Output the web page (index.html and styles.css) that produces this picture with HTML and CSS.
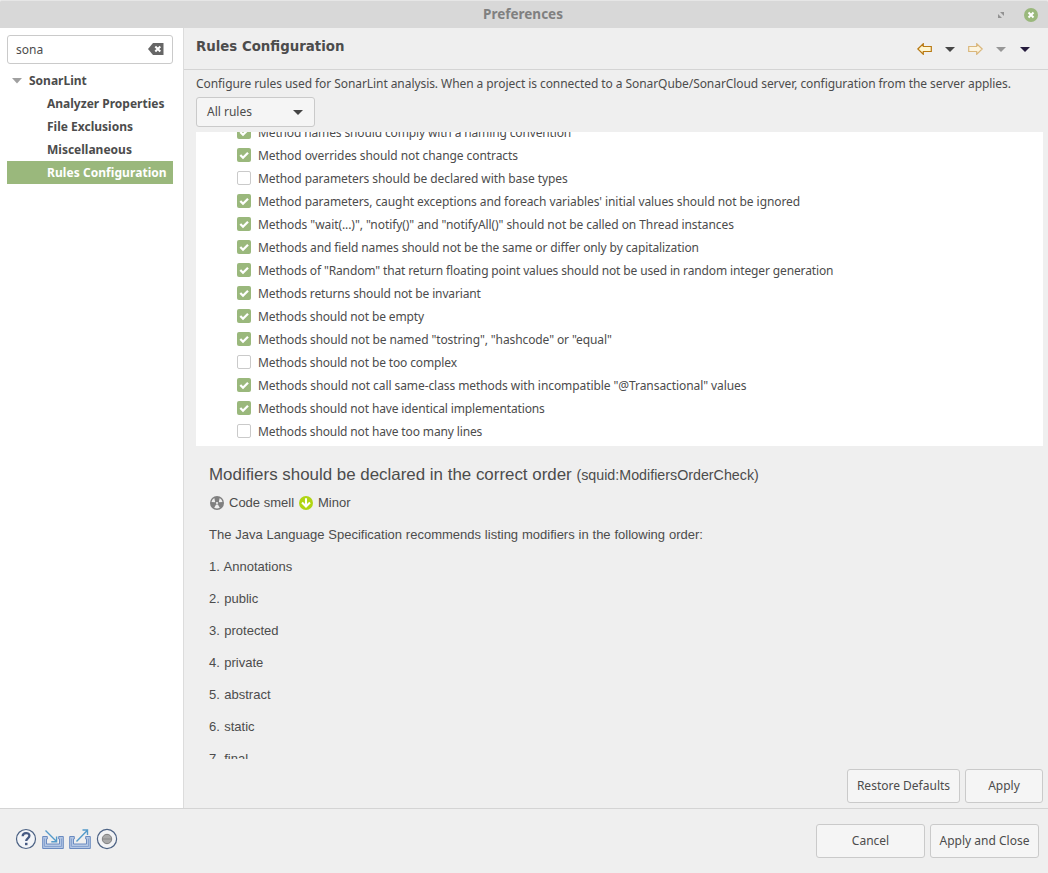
FILE: index.html
```
<!DOCTYPE html>
<html lang="en">
<head>
<meta charset="utf-8">
<title>Preferences</title>
<link rel="stylesheet" href="styles.css">
</head>
<body>
<div class="window">
  <header class="titlebar">
    <h1 class="window-title">Preferences</h1>
    <div class="window-controls">
      <svg width="8" height="8" viewBox="0 0 8 8"><path d="M3 1h4v4zM1 3v4h4z" fill="#929292"/></svg>
      <svg width="14" height="14" viewBox="0 0 14 14"><circle cx="7" cy="7" r="7" fill="#9ab87c"/><path d="M4.500 4.500l5 5M9.500 4.500l-5 5" stroke="#fff" stroke-width="2"/></svg>
    </div>
  </header>
  <div class="main">
    <aside class="sidebar">
      <div class="search">
        <span>sona</span>
        <svg width="16" height="12" viewBox="0 0 16 12"><path d="M5 0h10.500v12H5L0 6z" fill="#666"/><path d="M7.300 3.500l5 5M12.300 3.500l-5 5" stroke="#fff" stroke-width="2"/></svg>
      </div>
      <nav class="tree">
        <div class="tree-root"><svg width="10" height="6" viewBox="0 0 10 6"><path d="M0 0h10L5 5.500z" fill="#a0a0a0"/></svg><span>SonarLint</span></div>
        <div class="tree-item">Analyzer Properties</div>
        <div class="tree-item">File Exclusions</div>
        <div class="tree-item">Miscellaneous</div>
        <div class="tree-item selected">Rules Configuration</div>
      </nav>
    </aside>
    <main class="content">
      <div class="page-head">
        <h2 class="page-title">Rules Configuration</h2>
        <div class="history">
          <svg width="15" height="12" viewBox="0 0 15 12"><path d="M.8 6L6.300 .7V3.500h8v5h-8v2.800z" fill="#fff6d0" stroke="#b97a14" stroke-width="1.200"/></svg>
          <svg width="10" height="5" viewBox="0 0 10 5"><path d="M0 0h10L5 5z" fill="#464646"/></svg>
          <svg width="15" height="12" viewBox="0 0 15 12"><path d="M14.200 6L8.700 .7V3.500h-8v5h8v2.800z" fill="#fcf4df" stroke="#dab77c" stroke-width="1.200"/></svg>
          <svg width="10" height="5" viewBox="0 0 10 5"><path d="M0 0h10L5 5z" fill="#979797"/></svg>
          <svg class="menu-caret" width="10" height="5" viewBox="0 0 10 5"><path d="M0 0h10L5 5z" fill="#251b3d"/></svg>
        </div>
      </div>
      <p class="intro">Configure rules used for SonarLint analysis. When a project is connected to a SonarQube/SonarCloud server, configuration from the server applies.</p>
      <div class="select"><span>All rules</span><svg width="10" height="5" viewBox="0 0 10 5"><path d="M0 0h10L5 5z" fill="#444"/></svg></div>
      <div class="rules">
        <svg width="0" height="0" class="defs"><symbol id="tick" viewBox="0 0 14 14"><path d="M3.300 7l2.700 2.700 5-5" fill="none" stroke="#fff" stroke-width="2.300"/></symbol></svg>
        <div class="rule tight"><i class="box on"><svg><use href="#tick"/></svg></i><span>Method names should comply with a naming convention</span></div>
        <div class="rule"><i class="box on"><svg><use href="#tick"/></svg></i><span>Method overrides should not change contracts</span></div>
        <div class="rule"><i class="box"></i><span>Method parameters should be declared with base types</span></div>
        <div class="rule"><i class="box on"><svg><use href="#tick"/></svg></i><span>Method parameters, caught exceptions and foreach variables' initial values should not be ignored</span></div>
        <div class="rule"><i class="box on"><svg><use href="#tick"/></svg></i><span>Methods "wait(...)", "notify()" and "notifyAll()" should not be called on Thread instances</span></div>
        <div class="rule snug"><i class="box on"><svg><use href="#tick"/></svg></i><span>Methods and field names should not be the same or differ only by capitalization</span></div>
        <div class="rule tight"><i class="box on"><svg><use href="#tick"/></svg></i><span>Methods of "Random" that return floating point values should not be used in random integer generation</span></div>
        <div class="rule tight"><i class="box on"><svg><use href="#tick"/></svg></i><span>Methods returns should not be invariant</span></div>
        <div class="rule tight"><i class="box on"><svg><use href="#tick"/></svg></i><span>Methods should not be empty</span></div>
        <div class="rule snug"><i class="box on"><svg><use href="#tick"/></svg></i><span>Methods should not be named "tostring", "hashcode" or "equal"</span></div>
        <div class="rule tight"><i class="box"></i><span>Methods should not be too complex</span></div>
        <div class="rule"><i class="box on"><svg><use href="#tick"/></svg></i><span>Methods should not call same-class methods with incompatible "@Transactional" values</span></div>
        <div class="rule tight"><i class="box on"><svg><use href="#tick"/></svg></i><span>Methods should not have identical implementations</span></div>
        <div class="rule tight"><i class="box"></i><span>Methods should not have too many lines</span></div>
      </div>
      <section class="description">
        <h3 class="rule-title">Modifiers should be declared in the correct order <small>(squid:ModifiersOrderCheck)</small></h3>
        <div class="meta">
          <svg width="14" height="14" viewBox="0 0 14 14"><circle cx="7" cy="7" r="7" fill="#808080"/><g fill="#efefef"><path d="M5.200 6.300L1.500 6.100A5.600 5.600 0 0 1 4.300 2.100z"/><path d="M8.800 6.300l3.700-.2A5.600 5.600 0 0 0 9.700 2.100z"/><path d="M6.100 8.600l-1.900 3.200a5.600 5.600 0 0 0 5.600 0L7.900 8.600z"/><circle cx="7" cy="7" r="1.100"/></g></svg>
          <span>Code smell</span>
          <svg width="14" height="14" viewBox="0 0 14 14"><circle cx="7" cy="7" r="7" fill="#b0d513"/><path d="M7 2.300v8.200M3 6.500l4 4 4-4" fill="none" stroke="#fff" stroke-width="2.100"/></svg>
          <span>Minor</span>
        </div>
        <p class="lead">The Java Language Specification recommends listing modifiers in the following order:</p>
        <p>1. Annotations</p>
        <p>2. public</p>
        <p>3. protected</p>
        <p>4. private</p>
        <p>5. abstract</p>
        <p>6. static</p>
        <p>7. final</p>
      </section>
      <div class="page-actions">
        <button class="button restore">Restore Defaults</button>
        <button class="button apply">Apply</button>
      </div>
    </main>
  </div>
  <footer class="footer">
    <div class="tools">
      <svg width="22" height="22" viewBox="0 0 22 22"><circle cx="11" cy="11" r="9.500" fill="#f3f5f8" stroke="#4c6284" stroke-width="1.200"/><path d="M7.700 8.300c0-4.300 6.700-4.200 6.700-.6 0 2.500-3.200 2.700-3.200 5.300" fill="none" stroke="#465a83" stroke-width="2.300"/><rect x="10" y="14.800" width="2.500" height="2.400" fill="#465a83"/></svg>
      <svg width="22" height="22" viewBox="0 0 22 22"><path d="M.7 8.500h4.600v2.500H4.500v5h13v-5h-.8V8.500h4.600v12H.7z" fill="#b4c7e4" stroke="#6b8bc0"/><path d="M2.500 10.500v8h17v-8" fill="none" stroke="#88a3d0"/><path d="M3.500 2.500l11 11M14.600 8.500v5.300H9.300" fill="none" stroke="#549aca" stroke-width="1.400"/></svg>
      <svg width="22" height="22" viewBox="0 0 22 22"><path d="M.7 8.500h4.600v2.500H4.500v5h13v-5h-.8V8.500h4.600v12H.7z" fill="#b4c7e4" stroke="#6b8bc0"/><path d="M2.500 10.500v8h17v-8" fill="none" stroke="#88a3d0"/><path d="M7.500 13.500l10.700-11M13.500 2h5v5" fill="none" stroke="#549aca" stroke-width="1.400"/></svg>
      <svg width="22" height="22" viewBox="0 0 22 22"><circle cx="11" cy="11" r="9.600" fill="#f2f3f5" stroke="#4c6284" stroke-width="1.200"/><circle cx="11" cy="11" r="4.700" fill="#aaa" stroke="#808080"/><path d="M7 11h8" stroke="#888"/></svg>
    </div>
    <div class="dialog-actions">
      <button class="button wide">Cancel</button>
      <button class="button wide">Apply and Close</button>
    </div>
  </footer>
</div>
</body>
</html>
```
FILE: styles.css
```
* { box-sizing: border-box; }
body { margin: 0; font: 12px/23px "Noto Sans", sans-serif; color: #4c4c4c; }
h1, h2, h3, p { margin: 0; }
svg { display: block; flex: none; }
.window { width: 1048px; height: 873px; display: flex; flex-direction: column; background: #efefef; overflow: hidden; }
.titlebar { height: 28px; flex: none; display: grid; grid-template-columns: 1fr auto 1fr; align-items: center; background: #d8d8d8; border-top: 1px solid #e6e6e6; border-radius: 2px 2px 0 0; }
.window-title { grid-column: 2; font-size: 13.500px; line-height: 27px; color: #808080; margin-right: 2px; }
.window-controls { display: flex; justify-content: flex-end; align-items: center; gap: 19px; padding-right: 10px; }
.main { height: 780px; flex: none; display: flex; }
.sidebar { width: 184px; flex: none; background: #fff; border-right: 1px solid #dcdcdc; padding: 7px 10px 0 7px; }
.search { height: 29px; border: 1px solid #cacaca; border-radius: 3px; display: flex; align-items: center; justify-content: space-between; padding: 0 8px; }
.search svg { margin-bottom: 1px; }
.tree { margin-top: 5px; font-weight: bold; white-space: nowrap; }
.tree-root { display: flex; align-items: center; gap: 7px; padding-left: 5px; }
.tree-item { height: 23px; padding-left: 40px; }
.selected { background: #9ab87c; color: #fff; letter-spacing: .06px; }
.content { flex: 1; min-width: 0; display: flex; flex-direction: column; padding-right: 5px; }
.page-head { height: 42px; flex: none; display: flex; justify-content: space-between; padding: 6px 13px 0 12px; margin-right: -5px; border-bottom: 1px solid #d4d4d4; }
.page-title { font: bold 13.330px/25px "DejaVu Sans", sans-serif; }
.history { display: flex; align-items: center; height: 30px; gap: 13px; padding-right: 5px; }
.menu-caret { margin-left: 1px; }
.intro { height: 27px; line-height: 27px; padding-left: 12px; white-space: nowrap; letter-spacing: -.068px; }
.select { width: 119px; height: 30px; margin: 0 0 5px 12px; border: 1px solid #cacaca; border-radius: 3px; background: #f5f5f5; display: flex; align-items: center; justify-content: space-between; padding: 0 11px 0 10px; }
.select span { padding-bottom: 2px; }
.rules { height: 314px; flex: none; margin-left: 12px; padding-left: 41px; background: #fff; overflow: hidden; display: flex; flex-direction: column; justify-content: flex-end; padding-bottom: 3px; }
.defs { position: absolute; }
.rule { height: 23px; flex: none; display: flex; align-items: center; gap: 7px; white-space: nowrap; letter-spacing: -.075px; }
.rule.snug { letter-spacing: -.105px; }
.rule.tight { letter-spacing: -.135px; }
.box { width: 14px; height: 14px; margin-bottom: 2px; border: 1px solid #cacaca; border-radius: 2px; background: #fff; }
.box.on { border: 0; background: #9ab87c; }
.box svg { width: 14px; height: 14px; }
.description { height: 313px; flex: none; overflow: hidden; padding: 17px 0 0 25px; font: 13px/16px "Liberation Sans", sans-serif; }
.rule-title { font-size: 16.920px; line-height: 24px; font-weight: normal; white-space: nowrap; }
.rule-title small { font-size: 14.280px; }
.meta { display: flex; align-items: center; height: 16px; margin: 8px 0 16px; gap: 5px; padding-left: 1px; }
.description p { margin-bottom: 16px; word-spacing: .8px; }
.description .lead { word-spacing: .25px; }
.page-actions { display: flex; justify-content: flex-end; gap: 5px; margin-top: 10px; }
.button { height: 34px; padding: 0; font: 12px/20px "Noto Sans", sans-serif; color: #4c4c4c; background: #f5f5f5; border: 1px solid #cacaca; border-radius: 3px; }
.restore { width: 113px; }
.apply { width: 78px; }
.wide { width: 109px; }
.footer { flex: 1; display: flex; justify-content: space-between; align-items: center; border-top: 1px solid #d4d4d4; padding: 0 9px 0 15px; }
.tools { display: flex; gap: 5px; padding-bottom: 4px; }
.dialog-actions { display: flex; gap: 5px; }
```
